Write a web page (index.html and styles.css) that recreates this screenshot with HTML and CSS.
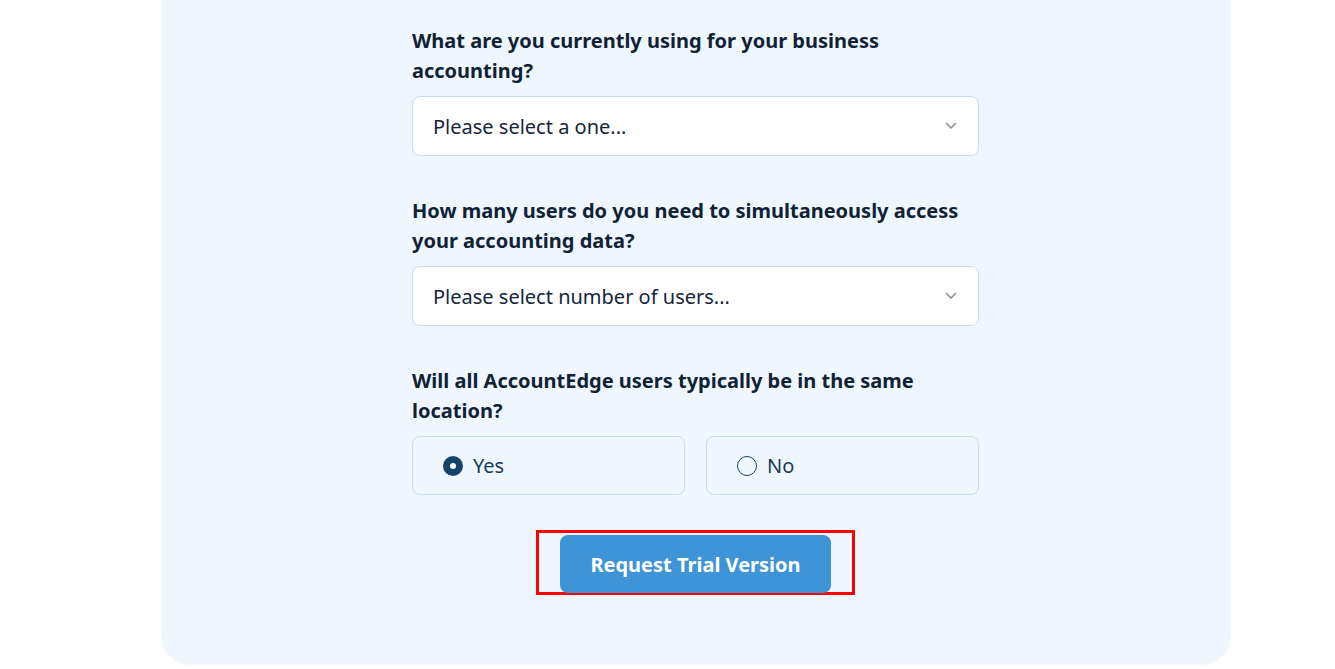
FILE: index.html
```html
<!DOCTYPE html>
<html lang="en">
<head>
<meta charset="utf-8">
<title>Request Trial</title>
<link rel="stylesheet" href="styles.css">
</head>
<body>
<div class="card">
  <form class="form">
    <div class="field">
      <label class="question">What are you currently using for your business accounting?</label>
      <div class="select">
        <span class="select-text">Please select a one...</span>
        <svg class="chevron" width="12" height="8" viewBox="0 0 12 8"><path d="M1.5 1.5 L6 6 L10.5 1.5" fill="none" stroke="#8a8f96" stroke-width="1.6" stroke-linecap="round" stroke-linejoin="round"/></svg>
      </div>
    </div>
    <div class="field">
      <label class="question">How many users do you need to simultaneously access your accounting data?</label>
      <div class="select">
        <span class="select-text">Please select number of users...</span>
        <svg class="chevron" width="12" height="8" viewBox="0 0 12 8"><path d="M1.5 1.5 L6 6 L10.5 1.5" fill="none" stroke="#8a8f96" stroke-width="1.6" stroke-linecap="round" stroke-linejoin="round"/></svg>
      </div>
    </div>
    <div class="field">
      <label class="question">Will all AccountEdge users typically be in the same location?</label>
      <div class="radios">
        <div class="radio-box">
          <span class="radio checked"></span>
          <span class="radio-label">Yes</span>
        </div>
        <div class="radio-box">
          <span class="radio"></span>
          <span class="radio-label">No</span>
        </div>
      </div>
    </div>
    <div class="actions">
      <div class="highlight">
        <button type="button" class="btn">Request Trial Version</button>
      </div>
    </div>
  </form>
</div>
</body>
</html>
```
FILE: styles.css
```css
html, body {
  margin: 0;
  padding: 0;
  background: #ffffff;
  font-family: "Noto Sans", "Open Sans", sans-serif;
}
.card {
  width: 1070px;
  margin-left: 161px;
  background: #f0f6fe;
  border-radius: 0 0 30px 30px;
  padding: 26px 0 70px;
  box-sizing: border-box;
}
.form {
  width: 567px;
  margin-left: 251px;
  display: flex;
  flex-direction: column;
  gap: 40px;
}
.field {
  display: flex;
  flex-direction: column;
  gap: 10px;
}
.question {
  font-size: 20px;
  line-height: 30px;
  font-weight: 700;
  color: #0f2236;
}
.select {
  height: 60px;
  box-sizing: border-box;
  background: #ffffff;
  border: 1px solid #c7dbf2;
  border-radius: 8px;
  display: flex;
  align-items: center;
  justify-content: space-between;
  padding: 0 21px 0 20px;
}
.select-text {
  font-size: 20px;
  color: #15253a;
}
.chevron {
  display: block;
}
.radios {
  display: flex;
  gap: 21px;
}
.radio-box {
  flex: 1;
  height: 59px;
  box-sizing: border-box;
  border: 1px solid #c7dbf2;
  border-radius: 8px;
  display: flex;
  align-items: center;
  padding-left: 30px;
  gap: 10px;
}
.radio {
  width: 20px;
  height: 20px;
  box-sizing: border-box;
  border-radius: 50%;
  border: 1.5px solid #15446b;
  background: transparent;
}
.radio.checked {
  background: #15446b;
  border: none;
  position: relative;
}
.radio.checked::after {
  content: "";
  position: absolute;
  left: 7px;
  top: 7px;
  width: 6px;
  height: 6px;
  border-radius: 50%;
  background: #ffffff;
}
.radio-label {
  font-size: 20px;
  color: #163b5e;
}
.actions {
  display: flex;
  justify-content: center;
  margin-top: -5px;
}
.highlight {
  border: 3px solid #ff0000;
  padding: 2px 21px 0 21px;
  height: 65px;
  box-sizing: border-box;
}
.btn {
  width: 271px;
  height: 58px;
  padding: 0;
  border: none;
  border-radius: 8px;
  background: #3d94d6;
  color: #ffffff;
  font-family: "Noto Sans", "Open Sans", sans-serif;
  font-size: 20px;
  font-weight: 700;
}
```
